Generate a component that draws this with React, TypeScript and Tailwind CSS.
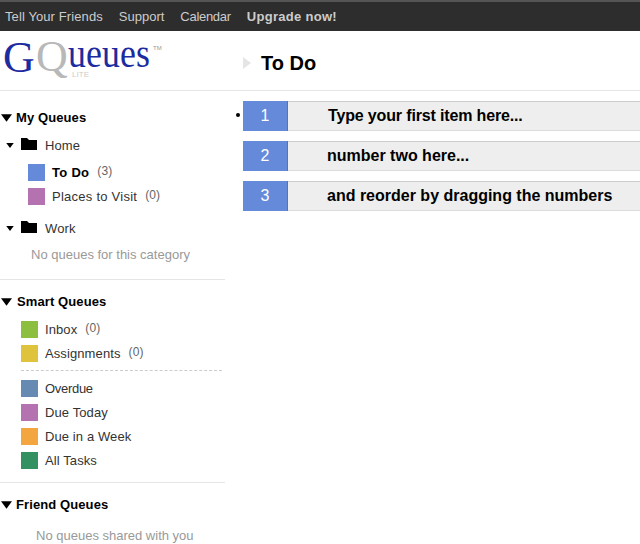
import React from 'react';

function Tri({ className }: { className: string }) {
  return (
    <svg viewBox="0 0 12 8" className={className}>
      <path d="M0 0h12L6 8z" fill="#000" />
    </svg>
  );
}

function Folder() {
  return (
    <svg viewBox="0 0 16 12" className="w-[16px] h-[12px] shrink-0">
      <path d="M0 0h6l2 2h8v10H0z" fill="#000" />
    </svg>
  );
}

function Logo() {
  return (
    <svg viewBox="0 0 243 59" className="w-[243px] h-[59px]" fontFamily="'Liberation Serif', serif">
      <text x="3" y="41" fontSize="44" fill="#1c2ba0">G</text>
      <text x="36" y="40" fontSize="44" fill="#b8b8b8">Q</text>
      <text x="68" y="36" fontSize="40" fill="#1c2ba0" textLength="82" lengthAdjust="spacingAndGlyphs">ueues</text>
      <text x="153" y="19" fontSize="6" fill="#999" fontFamily="'Liberation Sans', sans-serif">TM</text>
      <text x="72" y="46" fontSize="8" fill="#ccc" fontFamily="'Liberation Sans', sans-serif">LITE</text>
    </svg>
  );
}

function Queue({ color, name, count, bold, pad, nameClass }: { color: string; name: string; count?: number; bold?: boolean; pad: string; nameClass?: string }) {
  return (
    <div className={`flex items-center h-[24px] ${pad}`}>
      <div className={`w-[17px] h-[17px] shrink-0 ${color}`} />
      <span className={`ml-[7px] pt-[2px] ${bold ? 'font-bold text-black' : 'text-[#333]'} ${nameClass ?? ''}`}>{name}</span>
      {count !== undefined && <span className="ml-[8px] text-[12px] text-[#666] -mt-[2px]">({count})</span>}
    </div>
  );
}

function SectionHead({ title, gap }: { title: string; gap: string }) {
  return (
    <div className="flex items-center h-[20px]">
      <Tri className="w-[11px] h-[8px] ml-[1px]" />
      <span className={`font-bold text-[13px] text-black ${gap}`}>{title}</span>
    </div>
  );
}

function Category({ name }: { name: string }) {
  return (
    <div className="flex items-center h-[24px]">
      <Tri className="w-[8px] h-[5px] ml-[6px]" />
      <div className="ml-[7px] mb-[3px]"><Folder /></div>
      <span className="ml-[8px] pt-[2px] text-[#333]">{name}</span>
    </div>
  );
}

function Item({ n, text, indent, dot }: { n: number; text: string; indent: string; dot?: boolean }) {
  return (
    <div className="relative flex h-[30px] mb-[10px]">
      {dot && <div className="absolute -left-[7px] top-[12px] w-[4px] h-[4px] rounded-full bg-black" />}
      <div className="w-[45px] shrink-0 bg-[#668ada] border-r border-[#4f74c8] text-white text-[16px] flex items-center justify-center">{n}</div>
      <div className={`flex-1 bg-[#eeeeee] border-t border-b border-t-[#cccccc] border-b-[#dddddd] flex items-center font-bold text-[16px] text-black ${indent}`}>{text}</div>
    </div>
  );
}

export default function App() {
  return (
    <div className="w-[640px] h-[544px] overflow-hidden bg-white font-['Liberation_Sans',Arial,sans-serif] text-[13px] tracking-[0.1px]">
      <div className="h-[31px] bg-[#2d2d2d] border-t-2 border-[#555] flex items-center pl-[5px] text-[#cccccc] text-[13px]">
        <span className="tracking-[0.1px]">Tell Your Friends</span>
        <span className="ml-[16px] tracking-normal">Support</span>
        <span className="ml-[16px] tracking-[-0.3px]">Calendar</span>
        <span className="ml-[16px] font-bold tracking-[0.3px]">Upgrade now!</span>
      </div>
      <div className="h-[60px] flex border-b border-[#e5e5e5] w-full">
        <div className="w-[243px] shrink-0"><Logo /></div>
        <div className="flex items-center pt-[4px]">
          <svg viewBox="0 0 8 12" className="w-[8px] h-[12px]"><path d="M0 0l8 6-8 6z" fill="#e5e5e5" /></svg>
          <span className="ml-[10px] font-bold text-[20px] text-black tracking-normal">To Do</span>
        </div>
      </div>
      <div className="flex">
        <div className="w-[225px] shrink-0 pt-[17px]">
          <SectionHead title="My Queues" gap="ml-[4px]" />
          <div className="mt-[5px]">
            <Category name="Home" />
            <div className="mt-[3px]">
              <Queue pad="pl-[28px]" color="bg-[#668ada]" name="To Do" count={3} bold nameClass="tracking-[0.3px]" />
              <Queue pad="pl-[28px]" color="bg-[#b572b0]" name="Places to Visit" count={0} nameClass="tracking-[0.25px]" />
            </div>
            <div className="mt-[8px]"><Category name="Work" /></div>
            <div className="mt-[3px] pl-[31px] h-[24px] leading-[24px] text-[#999] tracking-normal">No queues for this category</div>
          </div>
          <div className="h-px bg-[#e5e5e5] mt-[12px]" />
          <div className="mt-[12px]"><SectionHead title="Smart Queues" gap="ml-[5px]" /></div>
          <div className="mt-[5px]">
            <Queue pad="pl-[21px]" color="bg-[#8cbf3f]" name="Inbox" count={0} />
            <Queue pad="pl-[21px]" color="bg-[#e0c33c]" name="Assignments" count={0} />
            <div className="border-t border-dashed border-[#cccccc] ml-[21px] mr-[3px] mt-[5px] mb-[5px]" />
            <Queue pad="pl-[21px]" color="bg-[#668ab2]" name="Overdue" nameClass="tracking-[-0.3px]" />
            <Queue pad="pl-[21px]" color="bg-[#b572b0]" name="Due Today" />
            <Queue pad="pl-[21px]" color="bg-[#f3a53f]" name="Due in a Week" />
            <Queue pad="pl-[21px]" color="bg-[#339060]" name="All Tasks" />
          </div>
          <div className="h-px bg-[#e5e5e5] mt-[10px]" />
          <div className="mt-[12px]"><SectionHead title="Friend Queues" gap="ml-[4px]" /></div>
          <div className="mt-[9px] pl-[36px] leading-[24px] text-[#999] tracking-normal">No queues shared with you</div>
        </div>
        <div className="flex-1 pl-[18px] pt-[10px] tracking-normal">
          <Item n={1} text="Type your first item here..." indent="pl-[40px] tracking-[-0.15px]" dot />
          <Item n={2} text="number two here..." indent="pl-[39px]" />
          <Item n={3} text="and reorder by dragging the numbers" indent="pl-[39px]" />
        </div>
      </div>
    </div>
  );
}
